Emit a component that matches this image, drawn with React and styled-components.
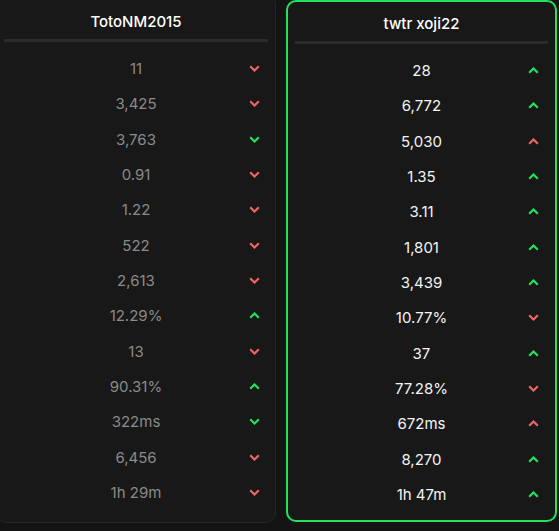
import React from 'react'
import styled, { createGlobalStyle } from 'styled-components'

const GlobalStyle = createGlobalStyle`
    html, body {
        margin: 0;
        padding: 0;
        background: #141414;
        overflow: hidden;
    }
    body {
        font-family: Inter, 'Noto Sans', sans-serif;
    }
`;

const Board = styled.div`
    display: flex;
    align-items: flex-start;
    gap: 10px;
    margin-left: -4px;
`;

const Card = styled.div`
    box-sizing: border-box;
    width: ${p => p.$highlight ? '271px' : '280px'};
    margin-top: ${p => p.$highlight ? '0' : '-6px'};
    padding: ${p => p.$highlight ? '12px 7px 8px' : '17px 7px 12px'};
    background: #181818;
    border: ${p => p.$highlight ? '2px solid #22e25a' : '1px solid #262626'};
    border-radius: 10px;
`;

const Title = styled.div`
    height: 20px;
    line-height: 20px;
    text-align: center;
    color: #ffffff;
    font-size: 15px;
    font-weight: 500;
`;

const Divider = styled.div`
    height: 3px;
    margin: 7px 0 9px;
    background: #2a2a2a;
`;

const Row = styled.div`
    display: grid;
    grid-template-columns: 30px 1fr 30px;
    align-items: center;
    height: 35.33px;
`;

const Value = styled.span`
    grid-column: 2;
    text-align: center;
    font-size: 15px;
    color: ${p => p.$highlight ? '#f4f4f4' : '#8a8a8a'};
`;

const Trend = styled.span`
    grid-column: 3;
    display: flex;
    justify-content: flex-end;
    align-items: center;
    padding-right: ${p => p.$highlight ? '9px' : '8px'};
`;

const Chevron = ({ up, good }) => (
    <svg width="11" height="7" viewBox="0 0 11 7">
        <polyline
            points={up ? '1.2,5.8 5.5,1.5 9.8,5.8' : '1.2,1.2 5.5,5.5 9.8,1.2'}
            fill="none"
            stroke={good ? '#22e25a' : '#f06464'}
            strokeWidth="2.2"
        />
    </svg>
);

const left = [
    ['11', 0], ['3,425', 0], ['3,763', 1], ['0.91', 0], ['1.22', 0], ['522', 0],
    ['2,613', 0], ['12.29%', 2], ['13', 0], ['90.31%', 2], ['322ms', 1],
    ['6,456', 0], ['1h 29m', 0],
]

const right = [
    ['28', 2], ['6,772', 2], ['5,030', 3], ['1.35', 2], ['3.11', 2], ['1,801', 2],
    ['3,439', 2], ['10.77%', 0], ['37', 2], ['77.28%', 0], ['672ms', 3],
    ['8,270', 2], ['1h 47m', 2],
]

// 0 down red, 1 down green, 2 up green, 3 up red
const Player = ({ name, stats, highlight }) => (
    <Card $highlight={highlight}>
        <Title>{name}</Title>
        <Divider />
        {stats.map(([v, t], i) => (
            <Row key={i}>
                <Value $highlight={highlight}>{v}</Value>
                <Trend $highlight={highlight}>
                    <Chevron up={t >= 2} good={t === 1 || t === 2} />
                </Trend>
            </Row>
        ))}
    </Card>
);

const App = () => {
    return (
        <>
            <GlobalStyle />
            <Board>
                <Player name="TotoNM2015" stats={left} />
                <Player name="twtr xoji22" stats={right} highlight />
            </Board>
        </>
    )
}

export default App
